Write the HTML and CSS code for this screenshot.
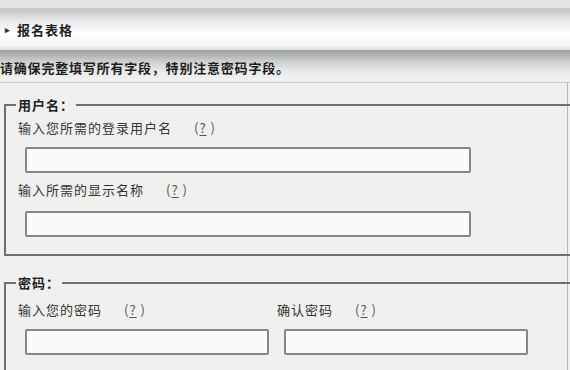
FILE: index.html
```html
<!DOCTYPE html>
<html lang="zh-CN">
<head>
<meta charset="utf-8">
<title>报名表格</title>
<link rel="stylesheet" href="styles.css">
</head>
<body>
<div class="topstrip"></div>
<div class="titlebar"><span class="arrow">▸</span><span class="title">报名表格</span></div>
<div class="notice">请确保完整填写所有字段，特别注意密码字段。</div>
<div class="content">
  <fieldset class="group group-user">
    <legend>用户名：</legend>
    <div class="field">
      <label class="label"><span class="ltext">输入您所需的登录用户名</span><span class="help">(<u>?</u>&nbsp;)</span></label>
      <input class="input input-wide" type="text">
    </div>
    <div class="field field-second">
      <label class="label"><span class="ltext">输入所需的显示名称</span><span class="help">(<u>?</u>&nbsp;)</span></label>
      <input class="input input-wide" type="text">
    </div>
  </fieldset>
  <fieldset class="group group-pass">
    <legend>密码：</legend>
    <div class="pair">
      <div class="field">
        <label class="label"><span class="ltext">输入您的密码</span><span class="help">(<u>?</u>&nbsp;)</span></label>
        <input class="input input-half" type="password">
      </div>
      <div class="field">
        <label class="label"><span class="ltext">确认密码</span><span class="help">(<u>?</u>&nbsp;)</span></label>
        <input class="input input-half" type="password">
      </div>
    </div>
  </fieldset>
</div>
</body>
</html>
```
FILE: styles.css
```css
html, body {
  margin: 0;
  height: 370px;
  overflow: hidden;
  background: #efefed;
  font-family: "Noto Sans CJK SC", "Noto Sans", sans-serif;
  font-size: 13px;
  letter-spacing: 1px;
}

.topstrip {
  height: 8px;
  background: #e4e5e3;
  border-bottom: 1px solid #c9cac8;
}

.titlebar {
  height: 41px;
  display: flex;
  align-items: center;
  gap: 6px;
  padding-left: 5px;
  background: linear-gradient(#c2c5c4, #e9eaea 30%, #ffffff 60%, #f6f6f6 88%, #dcdddc);
  border-bottom: 1px solid #a3a5a4;
  font-weight: bold;
  color: #1e1e1e;
}

.arrow {
  font-size: 9px;
  color: #333;
}

.notice {
  height: 32px;
  display: flex;
  align-items: center;
  padding-top: 2px;
  box-sizing: border-box;
  background: linear-gradient(#9ea2a1, #cfd1d0 35%, #eaebea 70%, #f2f2f1);
  border-bottom: 1px solid #c7c8c7;
  font-weight: bold;
  color: #1e1e1e;
  letter-spacing: 0.8px;
}

.content {
  width: 567px;
  height: 300px;
  border-right: 1px solid #b8b9b7;
  padding-top: 14px;
  background: #efefed;
}

.group {
  margin: 0 0 0 4px;
  width: 600px;
  border: 2px solid #6f706f;
  padding: 0 0 0 10px;
  color: #3a3a3a;
}

.group legend {
  padding: 0 2px;
  font-weight: bold;
  color: #222;
  line-height: 16px;
}

.group-user {
  padding-bottom: 17px;
}

.group-pass {
  margin-top: 19px;
  padding-bottom: 20px;
}

.field {
  display: flex;
  flex-direction: column;
  align-items: flex-start;
}

.label {
  display: flex;
  line-height: 16px;
  margin: 7px 0 0 2px;
  color: #353535;
}

.field-second .label {
  margin-top: 9px;
}

.field-second .input {
  margin-top: 13px;
}

.ltext {
  margin-right: 22px;
}

.help {
  color: #555;
}

.help u {
  text-decoration-thickness: 1px;
  text-underline-offset: 2px;
}

.input {
  display: block;
  margin: 11px 0 0 9px;
  height: 26px;
  box-sizing: border-box;
  border: 2px solid #858685;
  border-radius: 2px;
  background: #f9faf9;
  padding: 0;
}

.input-wide {
  width: 446px;
}

.input-half {
  width: 244px;
}

.pair {
  display: grid;
  grid-template-columns: 259px 260px;
}

.pair .label {
  margin-top: 11px;
}
```
